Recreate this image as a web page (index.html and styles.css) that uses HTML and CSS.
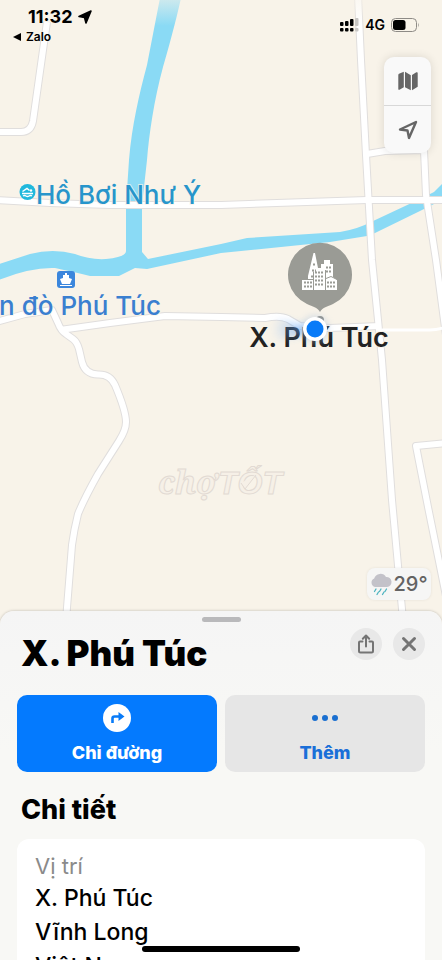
FILE: index.html
```html
<!DOCTYPE html>
<html lang="vi">
<head>
<meta charset="utf-8">
<meta name="viewport" content="width=device-width, initial-scale=1">
<title>X. Phú Túc</title>
<link rel="stylesheet" href="styles.css">
</head>
<body>
<div class="screen">
  <svg class="map" viewBox="0 0 442 960" preserveAspectRatio="xMidYMin slice" role="img" aria-label="Bản đồ">
    <defs>
      <radialGradient id="beam" cx="1" cy="0.5" r="1">
        <stop offset="0" stop-color="#2f86f5" stop-opacity="0.75"/>
        <stop offset="1" stop-color="#7db4f7" stop-opacity="0"/>
      </radialGradient>
      <filter id="soft" x="-30%" y="-30%" width="160%" height="160%"><feGaussianBlur stdDeviation="3"/></filter>
      <linearGradient id="fade" x1="0" y1="0" x2="0" y2="1">
        <stop offset="0" stop-color="#f8f3e9" stop-opacity="0.6"/>
        <stop offset="1" stop-color="#f8f3e9" stop-opacity="0"/>
      </linearGradient>
      <g id="roads">
        <path d="M47 22 43 50 33 121Q31 132 21 132H-4"/>
        <path d="M358-5 361 60 366 155 372 260 382 360 392 500 403 620"/>
        <path d="M367 154 385 151 424 150 426 195 436 260 446 335"/>
        <path d="M-4 200 50 203 110 205H221L367 200H446"/>
        <path d="M-4 322 25 314 52 310 58 323Q61 331 66 334L73 339Q77 342 79 349L82 362Q85 374 98 374.500Q110 374 115 385Q126 411 126 422Q126 430 119 441L98 474Q84 499 78 514Q74 530 72 545L66 620"/>
        <path d="M60 330 110 323 165 316 221 317 265 318Q280 315 288 319L300 326 330 328 380 326"/>
        <path d="M446 443 416 446 428 507 446 596"/>
      </g>
    </defs>
    <rect width="442" height="960" fill="#f8f3e9"/>
    <path class="water" d="M160-2H181C175 25 168 50 163 67 154 100 149 135 147 160L142 205V252L148 259 221 244 247 238 340 232Q358 229 371 222L420 199 434 192 446 180V198L420 211 375 233 367 236 330 242 221 253 147 269 135 268 119 276 90 276Q70 271 55 268 30 267-4 281V265L30 254Q53 248 75 254 90 260 106 259 126 257 126 251V205L129 160C132 125 139 95 147 65Z"/>
    <use href="#roads" class="road-edge"/>
    <use href="#roads" class="road"/>
    <path class="lane" d="M382 330H430Q438 330 446 327"/>
    <rect width="442" height="26" fill="url(#fade)"/>

    <circle cx="27.500" cy="192" r="8" fill="#20b8dc"/>
    <path d="M22.500 191.500 27 188.500 29.500 190.500" fill="none" stroke="#fff" stroke-width="1.500"/>
    <circle cx="31" cy="190.500" r="1.200" fill="#fff"/>
    <path d="M22 193.500h11M23 196q1.500-1 3 0t3 0 3 0" fill="none" stroke="#fff" stroke-width="1.300"/>
    <text class="place pool" x="36" y="204">Hồ Bơi Như Ý</text>

    <rect x="57" y="271" width="18" height="17" rx="3" fill="#3b86dc"/>
    <path d="M65 273h2v2h2v3l3 1-2 5h-8l-2-5 3-1v-3h2z" fill="#fff"/>
    <path d="M60 285.500h12" stroke="#fff" stroke-width="1"/>
    <text class="place pier" x="161" y="315" text-anchor="end">n đò Phú Túc</text>

    <text class="place town" x="319" y="347" text-anchor="middle">X. Phú Túc</text>
    <path d="M318 330 272 315Q268 330 274 343Z" fill="url(#beam)" filter="url(#soft)"/>
    <circle cx="320" cy="320" r="4" fill="#8d8d87"/>
    <path d="M320 312C317 307 313 307 307 304A32 32 0 1 1 333 304C327 307 323 307 320 312Z" fill="#9a9b95"/>
    <path d="M302 290V279H308V276L313.500 253H315L318 268H321V264H324V260H330V264H333V277L337 280V290Z" fill="#fff"/>
    <g class="windows">
      <path d="M304 282.500h9M304 286.500h9M315 272.500h9M315 276.500h9M315 280.500h9M315 284.500h9M326 267.500h6M326 271.500h6M327 282.500h9M327 286.500h9M311 276.500h3M312 270.500h4M313 264.500h3"/>
      <path class="gap" d="M313.500 290V271.500M325.500 290V270M302 279.500h11M326 278.500l5-2 6 3"/>
    </g>
    <circle cx="315" cy="329" r="14" fill="#9db9dc" opacity="0.350" filter="url(#soft)"/>
    <circle cx="315" cy="329" r="12" fill="#fff"/>
    <circle cx="315" cy="329" r="8.500" fill="#087bf8"/>

    <g class="watermark">
      <text class="mark-serif" x="158" y="494">chợ</text>
      <text class="mark-sans" x="218" y="494">TỐT</text>
      <path d="M241 483l4 6 11-14"/>
    </g>
  </svg>

  <main class="overlay">
    <header class="status">
      <div class="status-left">
        <div class="clock">11:32
          <svg width="14" height="14" viewBox="0 0 14 14" aria-hidden="true"><path d="M13 1 8 13 6.500 7.500 1 6.500Z" stroke="#000" stroke-width="1.600" stroke-linejoin="round"/></svg>
        </div>
        <a class="back" href="#"><svg width="8" height="8" viewBox="0 0 8 8" aria-hidden="true"><path d="M0 4 8 0V8Z"/></svg>Zalo</a>
      </div>
      <div class="status-right">
        <svg width="19" height="14" viewBox="0 0 19 14" aria-hidden="true">
          <rect x="0" y="4" width="3.500" height="4" rx="1"/><rect x="5" y="3" width="3.500" height="5" rx="1"/><rect x="10" y="1" width="3.500" height="7" rx="1"/><rect x="15" y="0" width="3.500" height="8" rx="1" fill="#c8c6c3"/>
          <rect x="0" y="10" width="3.500" height="3.500" rx="1"/><rect x="5" y="10" width="3.500" height="3.500" rx="1"/><rect x="10" y="10" width="3.500" height="3.500" rx="1"/><rect x="15" y="10" width="3.500" height="3.500" rx="1" fill="#c8c6c3"/>
        </svg>
        <span>4G</span>
        <svg width="29" height="14" viewBox="0 0 29 14" aria-hidden="true">
          <rect x="0.500" y="0.500" width="25" height="13" rx="4" fill="none" stroke="#8e8b86"/>
          <rect x="2" y="2" width="12.500" height="10" rx="2.500"/>
          <path d="M27 4.500q1.500 2.500 0 5z" fill="#8e8b86"/>
        </svg>
      </div>
    </header>
    <div class="controls">
      <button type="button" aria-label="Kiểu bản đồ">
        <svg width="20" height="20" viewBox="0 0 20 20" aria-hidden="true" fill="#666"><path d="M.3 4.200Q.3 3.300 1 2.800L5.800.8V16.300L1.500 18.700Q.3 19.200.3 18ZM7 .8 12.800 4.200V19.200L7 16.300ZM14 4 18.300 1.300Q19.700.8 19.700 2V15.800L14 19.200Z"/></svg>
      </button>
      <button type="button" aria-label="Vị trí của tôi">
        <svg width="20" height="20" viewBox="0 0 20 20" aria-hidden="true" fill="none" stroke="#666" stroke-width="2.400" stroke-linejoin="round"><path d="M18 2 11 18 9.500 10.500 2 9.500Z"/></svg>
      </button>
    </div>
    <div class="weather">
      <svg width="22" height="24" viewBox="0 0 22 24" aria-hidden="true">
        <path d="M5 15A4.500 4.500 0 0 1 4.200 6.500 6.500 6.500 0 0 1 16 5 5 5 0 0 1 17 15Z" fill="#c3c2c9"/>
        <path d="M6 17l-1.500 2.500M11 17l-1.500 2.500M16.500 17 15 19.500M8.500 20 7 22.500M14 20l-1.500 2.500" stroke="#4fb4c0" stroke-width="1.300" stroke-linecap="round"/>
      </svg>
      <span>29°</span>
    </div>
  </main>

  <section class="sheet" aria-labelledby="title">
    <div class="grabber"></div>
    <div class="sheet-head">
      <h1 id="title">X. Phú Túc</h1>
      <div class="head-actions">
        <button type="button" aria-label="Chia sẻ">
          <svg width="18" height="20" viewBox="0 0 18 20" aria-hidden="true"><path d="M5.500 7.500H3Q2 7.500 2 8.500V17Q2 18.500 3.500 18.500H14.500Q16 18.500 16 17V8.500Q16 7.500 15 7.500H12.500M9 12.500V2M5.800 4.800 9 1.500 12.200 4.800"/></svg>
        </button>
        <button type="button" aria-label="Đóng">
          <svg class="bold" width="18" height="18" viewBox="0 0 18 18" aria-hidden="true"><path d="M3.500 3.500 14.500 14.500M14.500 3.500 3.500 14.500"/></svg>
        </button>
      </div>
    </div>
    <div class="actions">
      <button type="button" class="primary">
        <svg width="28" height="28" viewBox="0 0 28 28" aria-hidden="true"><circle cx="14" cy="14" r="14" fill="#fff"/><path d="M9.500 19V14.500Q9.500 12.500 11.500 12.500H16" fill="none" stroke="#087bf8" stroke-width="2.600"/><path d="M15.500 8 21.500 12.500 15.500 17Z" fill="#087bf8"/></svg>
        Chỉ đường
      </button>
      <button type="button" class="secondary">
        <svg width="28" height="28" viewBox="0 0 28 28" aria-hidden="true"><g fill="#1a6fd0"><circle cx="4" cy="14" r="3"/><circle cx="14" cy="14" r="3"/><circle cx="24" cy="14" r="3"/></g></svg>
        Thêm
      </button>
    </div>
    <h2>Chi tiết</h2>
    <dl class="card">
      <dt>Vị trí</dt>
      <dd>X. Phú Túc</dd>
      <dd>Vĩnh Long</dd>
      <dd>Việt Nam</dd>
    </dl>
  </section>
  <div class="home-bar"></div>
</div>
</body>
</html>
```
FILE: styles.css
```css
* { box-sizing: border-box; }

body {
  margin: 0;
  font-family: Inter, "Noto Sans", sans-serif;
  color: #000;
}

button {
  margin: 0;
  padding: 0;
  border: 0;
  font: inherit;
  cursor: pointer;
}

svg { display: block; }

.screen {
  position: relative;
  display: grid;
  grid-template-rows: 7fr 4fr;
  height: 100vh;
  overflow: hidden;
  background: #f8f3e9;
}

/* Map */
.map {
  position: absolute;
  inset: 0;
  width: 100%;
  height: 100%;
}

.water { fill: #8adaf5; }

.road-edge,
.road {
  fill: none;
  stroke-linejoin: round;
}

.road-edge { stroke: #e0dedd; stroke-width: 8px; }
.road { stroke: #fff; stroke-width: 6px; }
.lane { fill: none; stroke: #fff; stroke-width: 3px; }

.place {
  font-size: 26px;
  font-weight: 500;
  paint-order: stroke;
  stroke: #f8f3e9;
  stroke-opacity: 0.7;
  stroke-width: 2px;
}

.pool { fill: #2795cb; }
.pier { fill: #3a7fd0; }
.town { fill: #222; font-size: 27px; font-weight: 600; }

.windows {
  fill: none;
  stroke: #9a9b95;
  stroke-width: 2px;
  stroke-dasharray: 2 1;
}

.windows .gap { stroke-width: 1px; stroke-dasharray: none; }

.watermark {
  fill: #f6f0e7;
  stroke: #e2dad3;
  stroke-width: 1px;
}

.mark-serif { font: italic 700 32px "Noto Serif", "Liberation Serif", serif; }
.mark-sans { font: italic 700 32px "Liberation Sans", sans-serif; }

/* Controls over the map */
.overlay {
  position: relative;
  display: flex;
  flex-direction: column;
  min-height: 0;
  padding-bottom: 11px;
}

.status {
  display: flex;
  justify-content: space-between;
  padding: 6px 22px 0 13px;
}

.clock {
  display: flex;
  align-items: center;
  gap: 5px;
  padding-left: 15px;
  font-size: 18px;
  font-weight: 700;
  line-height: 22px;
}

.back {
  display: flex;
  align-items: center;
  gap: 5px;
  color: #000;
  font-size: 12px;
  font-weight: 600;
  line-height: 17px;
  text-decoration: none;
}

.status-right {
  display: flex;
  align-items: center;
  gap: 6px;
  height: 37px;
  font-size: 14px;
  font-weight: 600;
}

.controls {
  display: grid;
  align-self: flex-end;
  width: 47px;
  margin: 12px 11px 0 0;
  border-radius: 10px;
  background: #f9f9f9;
  box-shadow: 0 0 10px rgba(0, 0, 0, 0.12);
}

.controls button {
  display: grid;
  place-items: center;
  height: 48px;
  background: none;
}

.controls button + button { border-top: 1px solid #d8d8d8; }

.weather {
  display: flex;
  align-items: center;
  align-self: flex-end;
  justify-content: center;
  gap: 1px;
  width: 64px;
  height: 32px;
  margin: auto 11px 0 0;
  border-radius: 8px;
  background: #f6f6f5;
  box-shadow: 0 0 3px rgba(0, 0, 0, 0.08);
  color: #636363;
  font-size: 20px;
  font-weight: 500;
}

/* Detail sheet */
.sheet {
  position: relative;
  min-height: 0;
  padding: 6px 17px 0;
  overflow: hidden;
  border-radius: 14px 14px 0 0;
  background: linear-gradient(#f5f5f5, #f8f8f5 40%);
  box-shadow: 0 0 3px rgba(0, 0, 0, 0.25);
}

.grabber {
  width: 39px;
  height: 5px;
  margin: 0 auto;
  border-radius: 3px;
  background: #b9b9bb;
}

.sheet-head {
  display: flex;
  justify-content: space-between;
  padding: 6px 0 0 4px;
}

h1 {
  margin: 0;
  font-size: 35px;
  font-weight: 900;
  line-height: 50px;
}

.head-actions {
  display: flex;
  gap: 11px;
}

.head-actions button {
  display: grid;
  place-items: center;
  width: 32px;
  height: 32px;
  border-radius: 50%;
  background: #e8e8e8;
}

.head-actions svg {
  fill: none;
  stroke: #747474;
  stroke-width: 2px;
  stroke-linecap: round;
  stroke-linejoin: round;
}

.head-actions .bold { stroke-width: 3px; }

.actions {
  display: grid;
  grid-template-columns: 1fr 1fr;
  gap: 8px;
  margin-top: 17px;
}

.actions button {
  display: flex;
  flex-direction: column;
  align-items: center;
  gap: 9px;
  height: 77px;
  padding-top: 9px;
  border-radius: 10px;
  font-size: 18px;
  font-weight: 800;
  line-height: 24px;
}

.primary { background: #047afe; color: #fff; }
.secondary { background: #e6e6e6; color: #1a6fd8; }

h2 {
  margin: 21px 0 12px 4px;
  font-size: 27px;
  font-weight: 800;
  line-height: 34px;
}

.card {
  margin: 0;
  padding: 12px 18px;
  border-radius: 12px;
  background: #fff;
  font-size: 23px;
  font-weight: 500;
  line-height: 34px;
}

dt {
  color: #8a8a8a;
  font-size: 22px;
  font-weight: 400;
  line-height: 30px;
}

dd { margin: 0; }

.home-bar {
  position: absolute;
  bottom: 8px;
  left: 50%;
  width: 158px;
  height: 6px;
  margin-left: -79px;
  border-radius: 3px;
  background: #000;
}
```
